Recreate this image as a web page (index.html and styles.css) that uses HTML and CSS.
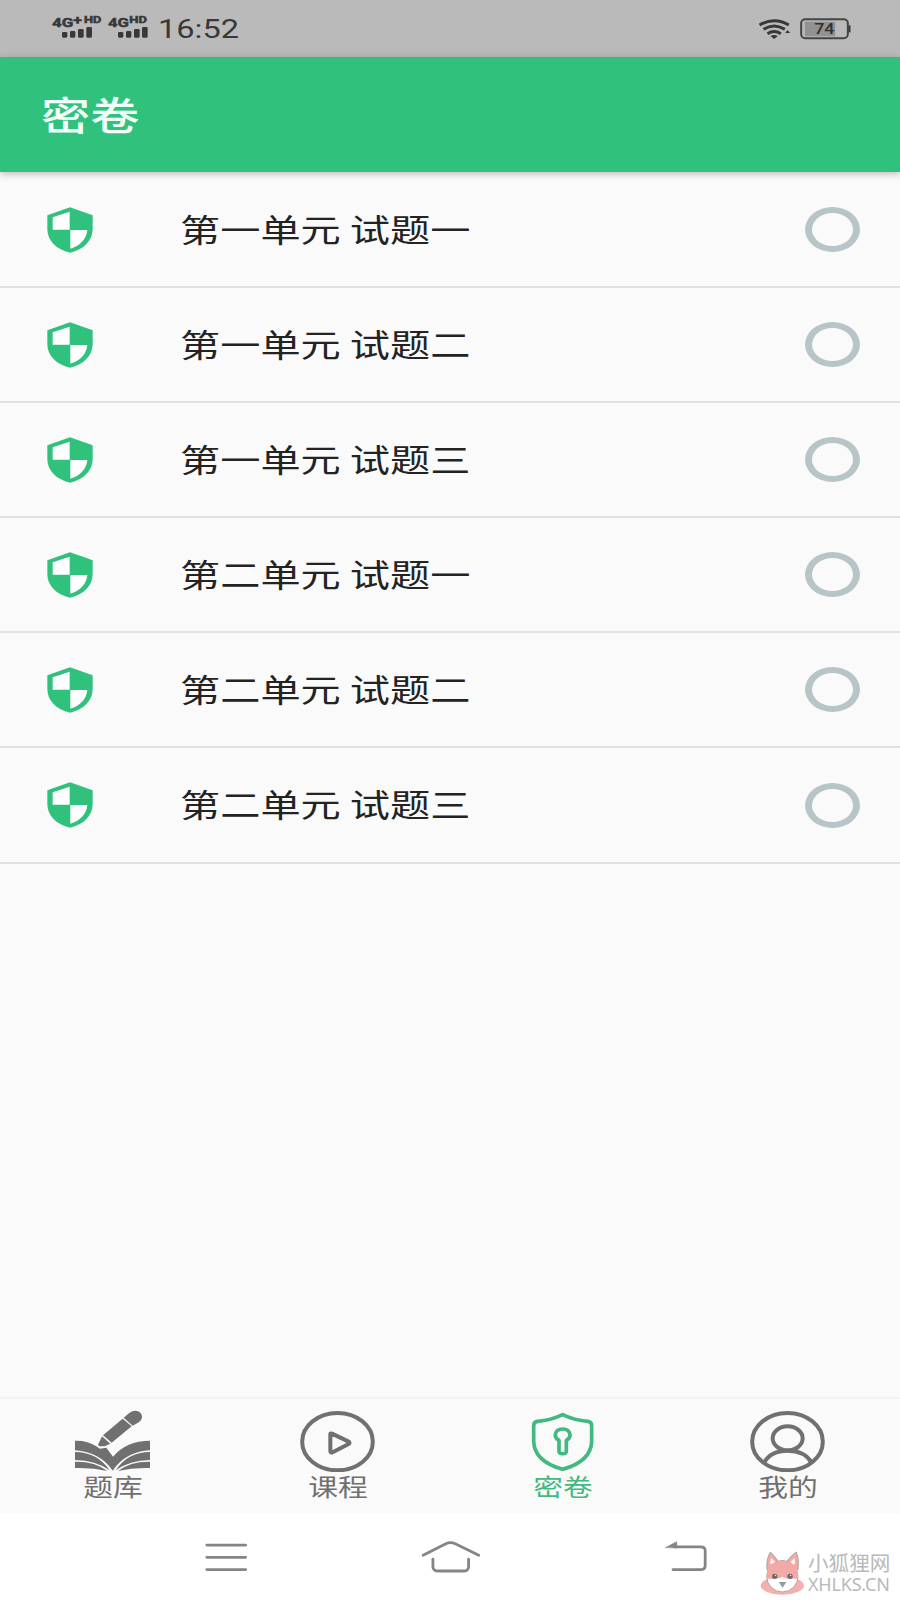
FILE: index.html
```html
<!DOCTYPE html>
<html lang="zh-CN">
<head>
<meta charset="utf-8">
<title>密卷</title>
<link rel="stylesheet" href="styles.css">
</head>
<body>
<svg class="defs" aria-hidden="true">
  <symbol id="shield" viewBox="0 0 138 138" preserveAspectRatio="none">
    <path d="M69 1L137 25V66C137 101 110 128 69 137C28 128 1 101 1 66V25Z" fill="#30c27c"/>
    <path d="M68 14L17 31V68H68ZM70 69H121C119 96 98 117 70 125Z" fill="#fff"/>
  </symbol>
</svg>
<div class="screen">
  <header class="status">
    <svg class="signal" viewBox="30 40 300 84">
      <g fill="#383838" font-family="Roboto" font-weight="700">
        <g stroke="#383838" stroke-width="1.500">
          <text x="36" y="81" font-size="39" textLength="64" lengthAdjust="spacingAndGlyphs">4G</text>
          <text x="100" y="75" font-size="38" textLength="26" lengthAdjust="spacingAndGlyphs">+</text>
          <text x="132" y="71" font-size="27" textLength="52" lengthAdjust="spacingAndGlyphs">HD</text>
          <text x="204" y="81" font-size="39" textLength="63" lengthAdjust="spacingAndGlyphs">4G</text>
          <text x="268" y="71" font-size="27" textLength="53" lengthAdjust="spacingAndGlyphs">HD</text>
        </g>
        <rect x="66" y="97" width="16" height="17" rx="4"/><rect x="90" y="94" width="16" height="20" rx="4"/><rect x="114" y="88" width="17" height="26" rx="4"/><rect x="139" y="82" width="17" height="32" rx="4"/>
        <rect x="234" y="97" width="16" height="17" rx="4"/><rect x="258" y="94" width="16" height="20" rx="4"/><rect x="282" y="88" width="17" height="26" rx="4"/><rect x="306" y="82" width="17" height="32" rx="4"/>
      </g>
    </svg>
    <span class="clock">16:52</span>
    <svg class="power" viewBox="50 45 290 81">
      <g fill="none" stroke="#383838" stroke-width="9">
        <path d="M57 75Q101 50 145 75M69 88Q101 68 133 88M81 101Q101 88 121 101"/>
        <path d="M90 108Q101 102 112 108L101 117ZM134 99L141 90L149 99Z" fill="#383838" stroke="none"/>
        <rect x="193" y="65" width="91" height="44" fill="#929292" stroke="none"/>
        <rect x="182" y="58" width="140" height="57" rx="12" stroke="#454545" stroke-width="6"/>
        <path d="M327 76V97" stroke-width="6"/>
      </g>
      <text x="221" y="103" font-family="Roboto" font-size="46" font-weight="500" fill="#303030" textLength="61" lengthAdjust="spacingAndGlyphs">74</text>
    </svg>
  </header>
  <div class="appbar"><h1 class="title">密卷</h1></div>
  <main class="list">
    <div class="row"><svg class="badge"><use href="#shield"/></svg><span class="name">第一单元 试题一</span><i class="radio"></i></div>
    <div class="row"><svg class="badge"><use href="#shield"/></svg><span class="name">第一单元 试题二</span><i class="radio"></i></div>
    <div class="row"><svg class="badge"><use href="#shield"/></svg><span class="name">第一单元 试题三</span><i class="radio"></i></div>
    <div class="row"><svg class="badge"><use href="#shield"/></svg><span class="name">第二单元 试题一</span><i class="radio"></i></div>
    <div class="row"><svg class="badge"><use href="#shield"/></svg><span class="name">第二单元 试题二</span><i class="radio"></i></div>
    <div class="row"><svg class="badge"><use href="#shield"/></svg><span class="name">第二单元 试题三</span><i class="radio"></i></div>
  </main>
  <nav class="tabs">
    <div class="tab">
      <svg class="icon" viewBox="75 60 225 186">
        <g fill="#707070">
          <path d="M75 152Q113 151 139 169L150 176L169 173L189 200Q229 152 300 152V181Q227 185 188 242Q151 187 75 181Z"/>
          <path d="M75 186Q143 187 179 241Q137 211 75 210ZM300 186Q232 187 197 241Q239 211 300 210Z"/>
          <path d="M75 215Q135 214 172 243Q126 232 75 234ZM300 215Q241 214 204 243Q250 232 300 234Z"/>
          <path d="M221 83L235 71Q249 59 264 64Q279 71 275 86Q273 92 264 98L248 107Z"/>
          <path d="M218 86L245 109L185 158L159 136ZM156 139L181 161L164 169L148 169L144 164Z"/>
        </g>
        <path d="M139 166L149 173L170 170" fill="none" stroke="#fafafa" stroke-width="2"/>
      </svg>
      <span class="label">题库</span>
    </div>
    <div class="tab">
      <svg class="icon" viewBox="750 60 225 186">
        <g fill="none" stroke="#707070" stroke-width="12" stroke-linejoin="round">
          <ellipse cx="862.500" cy="155" rx="106" ry="86"/>
          <path d="M841 132Q841 129 846 131L896 155Q901 159 896 162L848 187Q841 189 841 184Z"/>
        </g>
      </svg>
      <span class="label">课程</span>
    </div>
    <div class="tab active">
      <svg class="icon" viewBox="75 60 225 186">
        <g fill="none" stroke="#41b980" stroke-width="11" stroke-linejoin="round">
          <path d="M188 74Q223 91 264 94Q275 96 275 107V154Q273 214 188 238Q103 214 101 154V107Q101 96 112 94Q153 91 188 74Z"/>
          <path d="M177 151Q165 144 166 133Q169 117 188 117Q207 117 210 133Q211 144 199 151V184Q199 191 188 191Q177 191 177 184Z"/>
        </g>
      </svg>
      <span class="label">密卷</span>
    </div>
    <div class="tab">
      <svg class="icon" viewBox="750 60 225 186">
        <g fill="none" stroke="#707070" stroke-width="12">
          <ellipse cx="862.500" cy="155" rx="106" ry="86"/>
          <ellipse cx="863" cy="145" rx="45" ry="36"/>
          <path d="M792 218Q812 182 863 182Q914 182 935 218"/>
        </g>
      </svg>
      <span class="label">我的</span>
    </div>
  </nav>
  <footer class="sysnav">
    <svg class="keys" viewBox="57 80 1460 120">
      <g fill="none" stroke="#858585" stroke-width="8" stroke-linecap="round" stroke-linejoin="round">
        <path d="M75 106H186M75 141H186M75 176H186"/>
        <path d="M693 135L758 102Q771 96 785 102L852 135M721 146V168Q722 180 736 180H809Q822 180 823 168V146"/>
        <path d="M1407 176H1486Q1499 176 1499 164V122Q1499 111 1486 111H1412"/>
        <path d="M1385 113L1418 96V114Z" fill="#858585" stroke-width="1"/>
      </g>
    </svg>
    <div class="mark">
      <svg class="fox" viewBox="60 60 135 138">
        <ellipse cx="127" cy="167" rx="65" ry="27" fill="#f3b0ac"/>
        <g stroke="#b5a19c" stroke-width="3">
          <path d="M81 119Q78 88 91 66Q104 77 114 94Q127 90 140 94Q155 75 169 66Q179 90 174 119Z" fill="#f3aaa7"/>
          <path d="M90 100L93 83L106 96L96 106ZM165 100L164 83L151 96L160 107Z" fill="#fff2ef" stroke="none"/>
          <ellipse cx="127" cy="139" rx="47" ry="47" fill="#fff"/>
          <path d="M81 142Q79 94 127 93Q175 94 173 142L171 146H83Z" fill="#f3aaa7" stroke="none"/>
        </g>
        <path d="M108 146Q119 144 127 140Q136 144 146 146Z" fill="#fff"/>
        <circle cx="104" cy="139" r="8" fill="#6c6c6c"/><circle cx="150" cy="139" r="8" fill="#6c6c6c"/>
        <circle cx="106" cy="136" r="2" fill="#fff"/><circle cx="152" cy="136" r="2" fill="#fff"/>
        <path d="M116 156H139L128 173Z" fill="#8b9da5"/>
      </svg>
      <div class="site"><span class="site-name">小狐狸网</span><span class="site-url">XHLKS.CN</span></div>
    </div>
  </footer>
</div>
</body>
</html>
```
FILE: styles.css
```css
* { box-sizing: border-box; }
body { margin: 0; background: #fafafa; font-family: Roboto, "Noto Sans CJK SC", sans-serif; }
.defs { position: absolute; width: 0; height: 0; }
.screen { width: 900px; height: 1600px; display: flex; flex-direction: column; overflow: hidden; background: #fafafa; }
.status { height: 57px; flex: none; display: flex; align-items: flex-start; padding: 13px 46px 0 50px; background: #bababa; }
.signal { width: 100px; height: 28px; }
.clock { width: 62px; margin: 1px auto 0 8px; color: #383838; font-size: 25px; line-height: 31px; white-space: nowrap; transform: scaleX(1.3); transform-origin: left; }
.power { width: 97px; height: 27px; margin-top: 2px; }
.appbar { height: 115px; flex: none; display: flex; align-items: center; padding: 0 0 4px 41px; background: #30c27c; box-shadow: 0 2px 7px rgba(0, 0, 0, .25); position: relative; }
.title { margin: 0; color: #f2fff8; font: 500 39px/60px "Noto Sans CJK SC", sans-serif; transform: scaleX(1.26); transform-origin: left; }
.list { flex: 1; padding-top: 1px; }
.row { height: 115.100px; display: flex; align-items: center; padding: 0 40px 0 47px; border-bottom: 2px solid #e1e1e1; }
.badge { width: 46px; height: 46px; }
.name { margin: 0 0 4px 87px; color: #232323; font: 400 32px/48px "Noto Sans CJK SC", sans-serif; white-space: nowrap; transform: scaleX(1.256); transform-origin: left; }
.radio { width: 55px; height: 45px; margin-left: auto; border: 6px solid #b7c5c8; border-width: 6px 7px; border-radius: 50%; }
.tabs { height: 116px; flex: none; display: flex; border-top: 2px solid #f2f2f2; background: #fafafa; }
.tab { flex: 1; display: flex; flex-direction: column; align-items: center; padding-top: 11px; color: #707070; }
.icon { width: 75px; height: 62px; }
.label { margin-top: -1px; font: 400 24px/30px "Noto Sans CJK SC", sans-serif; transform: scaleX(1.24); }
.active { color: #41b980; }
.sysnav { height: 87px; flex: none; display: flex; background: #fff; }
.keys { width: 512px; height: 42px; margin: 23px 48px 0 200px; flex: none; }
.mark { display: flex; width: 140px; padding-top: 37px; }
.fox { width: 45px; height: 46px; flex: none; }
.site { display: flex; flex-direction: column; padding-left: 3px; color: #b9b9b9; white-space: nowrap; }
.site-name { font: 400 20.600px/25px "Noto Sans CJK SC", sans-serif; }
.site-url { font: 400 18px/18px "Noto Sans", sans-serif; letter-spacing: -.2px; }
```
